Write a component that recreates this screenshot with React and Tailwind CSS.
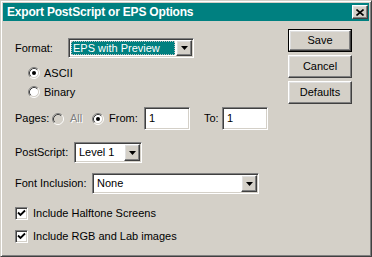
import React from 'react';

const raised =
  'border border-t-white border-l-white border-r-[#404040] border-b-[#404040] shadow-[inset_-1px_-1px_0_#808080,inset_1px_1px_0_#dfdfdf]';
const sunken =
  'border border-t-[#808080] border-l-[#808080] border-r-white border-b-white shadow-[inset_1px_1px_0_#404040,inset_-1px_-1px_0_#d4d0c8]';

const Radio = ({ checked, disabled }) => (
  <svg width="12" height="12" viewBox="0 0 12 12" className="shrink-0">
    <circle cx="6" cy="6" r="4.5" fill={disabled ? '#d4d0c8' : '#fff'} />
    <path d="M2.11 9.89A5.5 5.5 0 0 1 9.89 2.11" fill="none" stroke="#808080" />
    <path d="M9.89 2.11A5.5 5.5 0 0 1 2.11 9.89" fill="none" stroke="#fff" />
    <path d="M2.82 9.18A4.5 4.5 0 0 1 9.18 2.82" fill="none" stroke="#404040" />
    <path d="M9.18 2.82A4.5 4.5 0 0 1 2.82 9.18" fill="none" stroke="#d4d0c8" />
    {checked && <circle cx="6" cy="6" r="2" fill="#000" />}
  </svg>
);

const Check = () => (
  <div className={`${sunken} bg-white w-[13px] h-[13px] shrink-0 flex items-center justify-center`}>
    <svg width="9" height="9" viewBox="0 0 9 9">
      <path d="M1 3.5 L3.5 6 L8 1.5" fill="none" stroke="#000" strokeWidth="1.8" />
    </svg>
  </div>
);

const Arrow = () => (
  <svg width="7" height="4" viewBox="0 0 7 4">
    <path d="M0 0H7L3.5 4Z" fill="#000" />
  </svg>
);

const Combo = ({ className, value, focused }) => (
  <div className={`${sunken} ${className} bg-white flex items-stretch p-[1px] h-[21px]`}>
    <div className="flex-1 flex items-stretch min-w-0">
      {focused ? (
        <div className="m-[1px] flex-1 bg-[#008080] border border-dotted border-[#c0c0c0] text-white pl-[1px] flex items-center leading-none">
          {value}
        </div>
      ) : (
        <div className="pl-[3px] flex items-center leading-none">{value}</div>
      )}
    </div>
    <div className={`${raised} bg-[#d4d0c8] w-[16px] flex items-center justify-center`}>
      <Arrow />
    </div>
  </div>
);

const Field = ({ value }) => (
  <div className={`${sunken} bg-white w-[46px] h-[23px] pl-[4px] flex items-center leading-none`}>{value}</div>
);

const Button = ({ children, primary }) => {
  const inner = (
    <div className={`${raised} bg-[#d4d0c8] flex-1 flex items-center justify-center leading-none`}>{children}</div>
  );
  return primary ? (
    <div className="border border-black h-[23px] flex">{inner}</div>
  ) : (
    <div className="h-[23px] flex">{inner}</div>
  );
};

export default function App() {
  return (
    <div
      className="w-[372px] h-[257px] bg-[#d4d0c8] border border-t-[#d4d0c8] border-l-[#d4d0c8] border-r-[#404040] border-b-[#404040] shadow-[inset_1px_1px_0_#fff,inset_-1px_-1px_0_#808080] p-[2px] flex flex-col text-[11px] text-black"
      style={{ fontFamily: '"Liberation Sans", Arial, sans-serif' }}
    >
      {/* Title bar */}
      <div className="h-[18px] bg-[#008080] flex items-center justify-between pl-[4px] pr-[1px] shrink-0">
        <span className="text-white font-bold text-[12px] tracking-[-0.2px] leading-none">
          Export PostScript or EPS Options
        </span>
        <div className={`${raised} bg-[#d4d0c8] w-[16px] h-[14px] flex items-center justify-center`}>
          <svg width="8" height="7" viewBox="0 0 8 7">
            <path d="M0.5 0.5L7.5 6.5M7.5 0.5L0.5 6.5" stroke="#000" strokeWidth="1.6" />
          </svg>
        </div>
      </div>

      {/* Body */}
      <div className="flex flex-1 pl-[12px] pr-[17px]">
        <div className="flex-1 flex flex-col">
          <div className="mt-[17px] h-[20px] flex items-center">
            <span className="w-[53px]">Format:</span>
            <Combo className="w-[126px] !h-[20px]" value="EPS with Preview" focused />
          </div>

          <div className="mt-[7px] h-[16px] flex items-center pl-[13px] gap-[4px]">
            <Radio checked />
            <span>ASCII</span>
          </div>
          <div className="mt-[3px] h-[16px] flex items-center pl-[13px] gap-[4px]">
            <Radio />
            <span>Binary</span>
          </div>

          <div className="mt-[7px] h-[23px] flex items-center">
            <span className="w-[37px]">Pages:</span>
            <Radio disabled />
            <span className="ml-[6px] w-[22px] text-[#808080] [text-shadow:1px_1px_0_#fff]">All</span>
            <Radio checked />
            <span className="ml-[5px] w-[35px]">From:</span>
            <Field value="1" />
            <span className="ml-[14px] w-[18px]">To:</span>
            <Field value="1" />
          </div>

          <div className="mt-[12px] h-[21px] flex items-center">
            <span className="w-[59px]">PostScript:</span>
            <Combo className="w-[68px]" value="Level 1" />
          </div>

          <div className="mt-[10px] h-[21px] flex items-center">
            <span className="w-[77px]">Font Inclusion:</span>
            <Combo className="w-[167px]" value="None" />
          </div>

          <div className="mt-[11px] h-[16px] flex items-center gap-[5px]">
            <Check />
            <span>Include Halftone Screens</span>
          </div>
          <div className="mt-[7px] h-[16px] flex items-center gap-[5px]">
            <Check />
            <span>Include RGB and Lab images</span>
          </div>
        </div>

        <div className="w-[64px] pt-[8px] flex flex-col gap-[3px]">
          <Button primary>Save</Button>
          <Button>Cancel</Button>
          <Button>Defaults</Button>
        </div>
      </div>
    </div>
  );
}
